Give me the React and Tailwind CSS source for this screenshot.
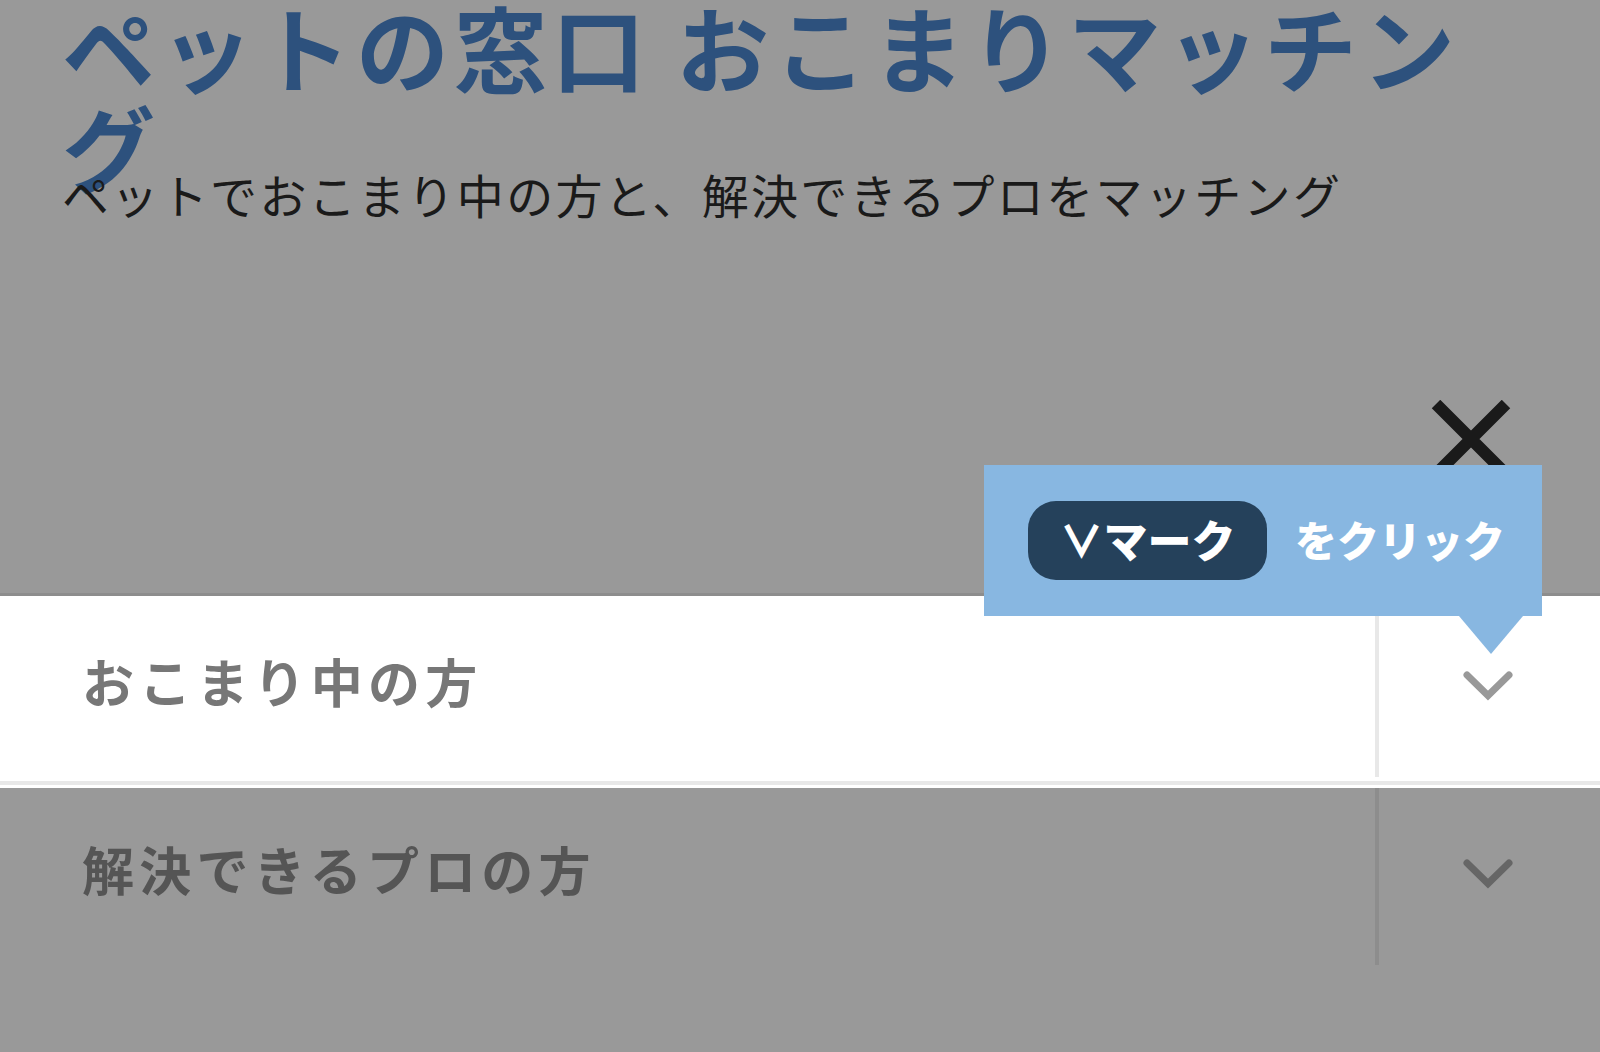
import { useState } from 'react';

const items = [
    { id: 'owner', label: 'おこまり中の方' },
    { id: 'pro', label: '解決できるプロの方' },
];

function ChevronIcon({ className = '' }) {
    return (
        <svg viewBox="0 0 50 30" className={`w-[50px] h-[30px] ${className}`} fill="none" stroke="currentColor" strokeWidth="7" aria-hidden="true">
            <path d="M4 4 L25 24.5 L46 4" strokeLinecap="round" />
        </svg>
    );
}

function CloseIcon() {
    return (
        <svg viewBox="0 0 80 80" className="w-20 h-20" fill="none" stroke="currentColor" strokeWidth="12" aria-hidden="true">
            <path d="M5 4 L75 74 M75 4 L5 74" />
        </svg>
    );
}

function Callout() {
    return (
        <div className="absolute right-[58px] -top-[131px] z-10 w-[558px] h-[151px] pl-11 flex items-center gap-7 bg-[#88b7e1] text-white text-[42px] leading-[60px] font-black whitespace-nowrap">
            <span className="w-[239px] h-[79px] pb-1 rounded-[28px] bg-[#25415b] text-[44px] flex items-center justify-center">∨マーク</span>
            <span className="pb-1">をクリック</span>
            <svg viewBox="0 0 64 38" className="absolute right-[19px] top-full w-16 h-[38px]" fill="#88b7e1" aria-hidden="true">
                <path d="M0 0 H64 L32 38 Z" />
            </svg>
        </div>
    );
}

function MenuRow({ label, active, onClick }) {
    return (
        <button
            type="button"
            onClick={onClick}
            aria-expanded={active}
            className={`w-full flex text-left ${active ? 'h-48 bg-white text-[#777777]' : 'h-[177px] bg-[#999999] text-[#555555]'}`}
        >
            <span className={`w-full flex ${active ? 'h-[189px] border-b-4 border-[#e8e8e8]' : 'h-full'}`}>
                <span className={`flex-1 pl-[82px] text-[52px] leading-[76px] font-bold tracking-widest ${active ? 'pt-[47px]' : 'pt-[43px]'}`}>{label}</span>
                <span className={`w-[225px] pr-1 flex justify-center border-l-4 ${active ? 'h-[181px] pt-[75px] border-[#e8e8e8] text-[#999999]' : 'h-full pt-[71px] border-[#8d8d8d] text-[#666666]'}`}>
                    <ChevronIcon />
                </span>
            </span>
        </button>
    );
}

export default function App() {
    const [selected, setSelected] = useState('owner');

    return (
        <div className="min-h-screen bg-[#999999] font-['Noto_Sans_CJK_JP',sans-serif]" lang="ja">
            <header className="h-[400px] px-[62px] flex flex-col">
                <h1 className="-mt-1 text-[93px] leading-[100px] font-bold tracking-[5px] text-[#2d517d]">ペットの窓口 おこまりマッチング</h1>
                <p className="relative -mt-9 text-[47px] leading-[68px] tracking-wider text-[#1a1a1a]">
                    ペットでおこまり中の方と、解決できるプロをマッチング
                </p>
            </header>
            <div className="h-[193px] pr-[89px] flex justify-end items-start">
                <button type="button" aria-label="閉じる" className="text-[#1a1a1a]">
                    <CloseIcon />
                </button>
            </div>
            <nav className="relative border-t-[3px] border-[#8d8d8d]">
                {items.map((item) => (
                    <MenuRow key={item.id} label={item.label} active={item.id === selected} onClick={() => setSelected(item.id)} />
                ))}
                <Callout />
            </nav>
        </div>
    );
}
